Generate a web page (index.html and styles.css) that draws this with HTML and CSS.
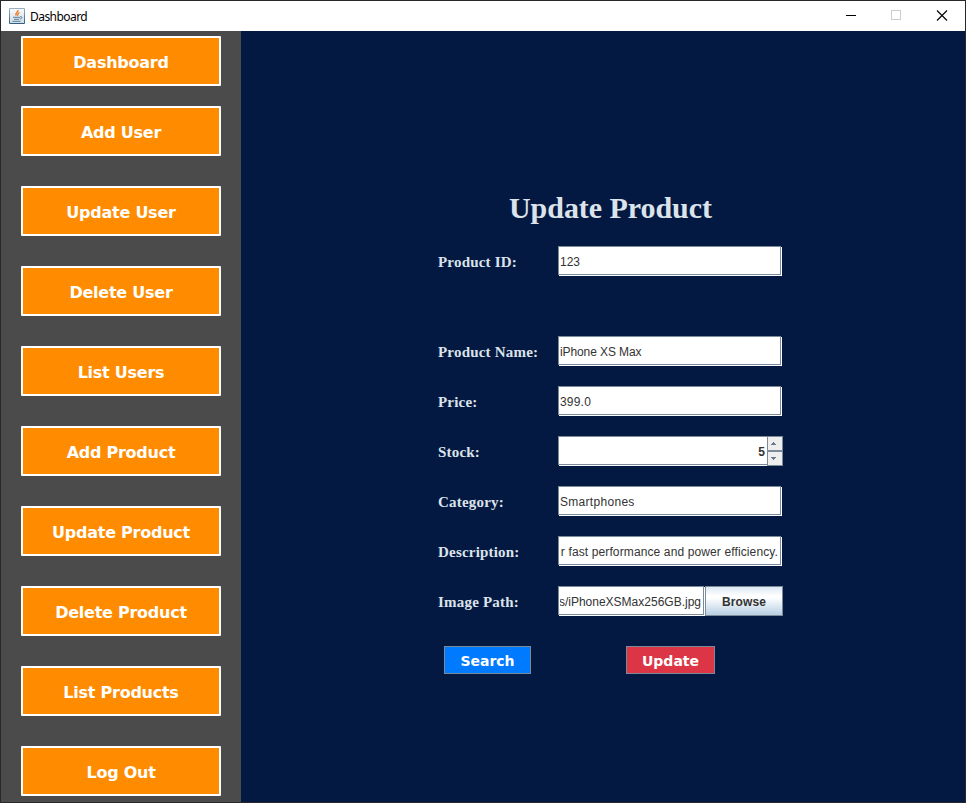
FILE: index.html
```html
<!DOCTYPE html>
<html lang="en">
<head>
<meta charset="utf-8">
<title>Dashboard</title>
<link rel="stylesheet" href="styles.css">
</head>
<body>
<div class="window">
  <header class="titlebar">
    <svg class="app-icon" width="16" height="16" viewBox="0 0 16 16">
      <defs><linearGradient id="tile" x1="0" y1="0" x2="0" y2="1"><stop offset="0" stop-color="#9fb2c2"/><stop offset="1" stop-color="#2f5c80"/></linearGradient><linearGradient id="face" x1="0" y1="0" x2="0" y2="1"><stop offset="0" stop-color="#f8f9fb"/><stop offset="1" stop-color="#d2dce5"/></linearGradient></defs>
      <rect width="16" height="16" rx="1" fill="url(#tile)"/>
      <rect x="1" y="1" width="14" height="14" fill="url(#face)"/>
      <path d="M9 2C9.800 4 5.800 4.400 7.200 7.500M10.500 4.500C8 5.300 9.700 6.200 8.300 7.800" fill="none" stroke="#e87820" stroke-width="1.300"/>
      <path d="M4 9.300h7M5 11.300h5M3.500 13.300h8M11 8.800c3-.7 2.300 2-.2 2.200" fill="none" stroke="#5b829e"/>
    </svg>
    <span class="window-title">Dashboard</span>
    <svg class="controls" width="110" height="30" viewBox="0 0 110 30">
      <path d="M5 14.500h10" stroke="#000"/>
      <rect x="50.500" y="9.500" width="9" height="9" fill="none" stroke="#ccc"/>
      <path d="M96 9.500l10 10M106 9.500l-10 10" stroke="#000" stroke-width="1.100"/>
    </svg>
  </header>
  <div class="body">
    <nav class="sidebar">
      <button class="nav first">Dashboard</button>
      <button class="nav">Add User</button>
      <button class="nav">Update User</button>
      <button class="nav">Delete User</button>
      <button class="nav">List Users</button>
      <button class="nav">Add Product</button>
      <button class="nav">Update Product</button>
      <button class="nav">Delete Product</button>
      <button class="nav">List Products</button>
      <button class="nav">Log Out</button>
    </nav>
    <main class="content">
      <h1>Update Product</h1>
      <div class="form">
        <div class="row id-row"><label>Product ID:</label><div class="field">123</div></div>
        <div class="row"><label>Product Name:</label><div class="field name">iPhone XS Max</div></div>
        <div class="row"><label>Price:</label><div class="field price">399.0</div></div>
        <div class="row"><label>Stock:</label>
          <div class="spinner"><div class="field number">5</div>
            <div class="steps">
              <div class="step"><svg width="5" height="3"><path d="M2 0h1v1h1v1h1v1H0V2h1V1h1z"/></svg></div>
              <div class="step"><svg width="5" height="3"><path d="M0 0h5v1H4v1H3v1H2V2H1V1H0z"/></svg></div>
            </div>
          </div>
        </div>
        <div class="row"><label>Category:</label><div class="field category">Smartphones</div></div>
        <div class="row"><label>Description:</label><div class="field end"><span class="clip"><span class="description">r fast performance and power efficiency.</span></span></div></div>
        <div class="row"><label>Image Path:</label><div class="field end path"><span class="clip"><span>s/iPhoneXSMax256GB.jpg</span></span></div><button class="browse">Browse</button></div>
      </div>
      <div class="actions">
        <button class="action search">Search</button>
        <button class="action update">Update</button>
      </div>
    </main>
  </div>
</div>
</body>
</html>
```
FILE: styles.css
```css
* { box-sizing: border-box; }
body { margin: 0; }
button { margin: 0; padding: 0; border-radius: 0; flex: none; }
.window { width: 966px; height: 803px; border: 1px solid #29272c; display: flex; flex-direction: column; overflow: hidden; }
.titlebar { height: 30px; background: #fff; display: flex; align-items: center; padding-left: 8px; flex: none; }
.window-title { font: 12px "Noto Sans", sans-serif; margin-left: 5px; letter-spacing: -0.55px; flex: 1; color: #000; }
.controls { margin-right: 14px; }
.body { display: flex; flex: 1; }
.sidebar { width: 240px; background: #4b4b4b; display: flex; flex-direction: column; align-items: center; gap: 30px; padding-top: 5px; }
.nav { width: 200px; height: 50px; background: #ff8c00; border: 2px solid #fff; border-radius: 1px; color: #fff; font: bold 16px/46px "DejaVu Sans", sans-serif; padding-top: 2px; letter-spacing: -0.25px; }
.nav.first { margin-bottom: -10px; }
.content { flex: 1; background: #041942; padding-left: 197px; }
h1 { margin: 159px 0 0 71px; font: bold 30px/36px "Liberation Serif", serif; color: #dce3eb; letter-spacing: -0.05px; }
.form { margin-top: 20px; display: flex; flex-direction: column; gap: 20px; }
.row { display: flex; height: 30px; }
.id-row { margin-bottom: 40px; }
label { width: 120px; font: bold 15px/32px "Liberation Serif", serif; letter-spacing: 0.2px; color: #dce3eb; }
.field { width: 223px; height: 29px; background: #fff; border: 1px solid #7a8a99; box-shadow: 1px 1px #fff; font: 12px/30px "Liberation Sans", sans-serif; color: #333; padding-left: 1px; white-space: nowrap; }
.name { letter-spacing: -0.1px; }
.price { letter-spacing: 0.2px; }
.category { letter-spacing: 0.3px; }
.end { padding-right: 2px; }
.clip { display: flex; justify-content: flex-end; overflow: hidden; height: 27px; }
.description { letter-spacing: 0.12px; }
.path { width: 146px; margin-right: 1px; padding-right: 2px; }
.spinner { display: flex; width: 225px; }
.number { width: 209px; text-align: right; padding-right: 2px; border-right: 0; font-weight: bold; }
.steps { width: 16px; height: 30px; display: grid; grid-template-rows: 15px 15px; }
.step { background: #eee; border: 1px solid #7a8a99; display: flex; align-items: center; justify-content: center; padding-right: 3px; fill: #66788b; }
.browse { width: 78px; height: 30px; border: 1px solid #7a8a99; background: linear-gradient(#dde8f3 0%, #fff 32%, #fff 38%, #b8cfe5 100%); font: bold 12px "Liberation Sans", sans-serif; color: #333; letter-spacing: 0.1px; padding-top: 2px; }
.actions { display: flex; padding: 30px 0 0 6px; gap: 95px; }
.action { width: 87px; height: 28px; border: 1px solid #7a8a99; color: #fff; font: bold 14px/26px "DejaVu Sans", sans-serif; padding-top: 1px; }
.search { background: #007bff; }
.update { width: 89px; background: #dc3545; }
```
